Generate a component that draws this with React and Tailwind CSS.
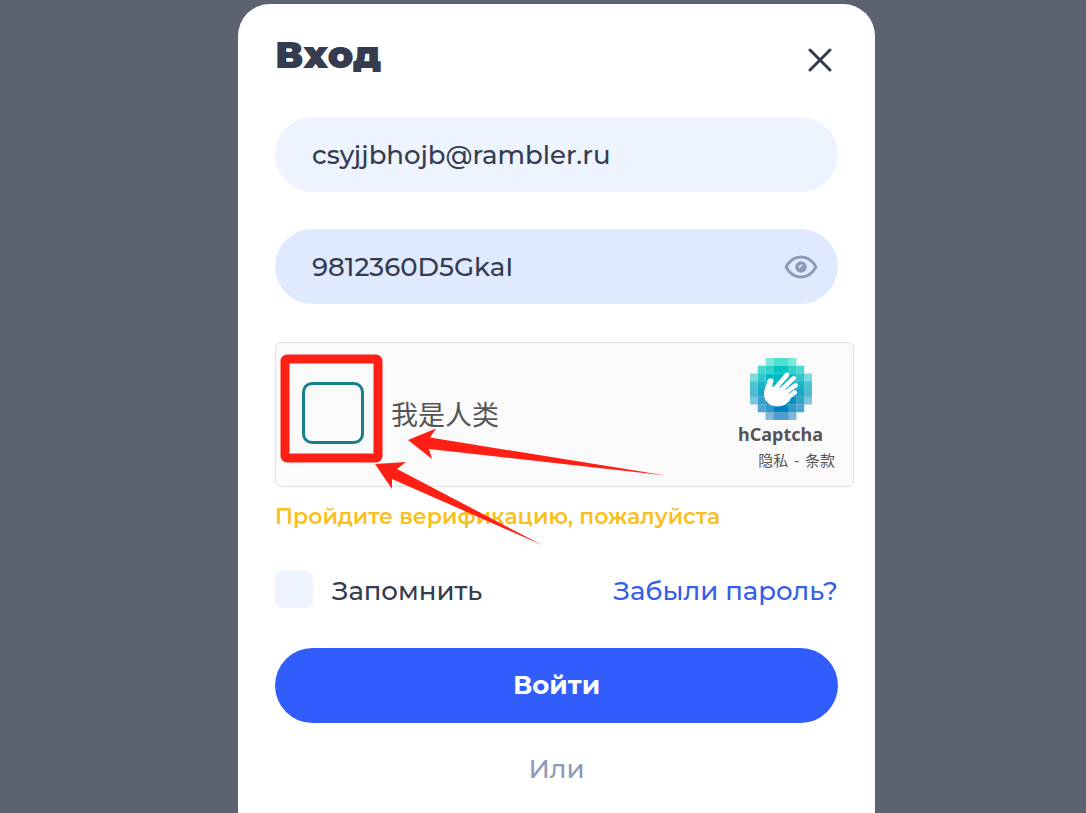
import React, { useState } from "react";

// Each row of the logo mosaic: colour, first column and the opacity of its cells
const mosaic = [
  { fill: "#00D4BF", start: 2, cells: [0.5, 0.7, 0.7, 0.5] },
  { fill: "#00C6BF", start: 1, cells: [0.7, 0.8, 1, 1, 0.8, 0.7] },
  { fill: "#00B9BF", start: 0, cells: [0.5, 0.8, 1, 1, 1, 1, 0.8, 0.5] },
  { fill: "#00ABBF", start: 0, cells: [0.7, 0.9, 1, 1, 1, 1, 0.9, 0.7] },
  { fill: "#009DBF", start: 0, cells: [0.7, 0.9, 1, 1, 1, 1, 0.9, 0.7] },
  { fill: "#008FBF", start: 0, cells: [0.5, 0.8, 1, 1, 1, 1, 0.8, 0.5] },
  { fill: "#0082BF", start: 1, cells: [0.7, 0.8, 1, 1, 0.8, 0.7] },
  { fill: "#0074BF", start: 2, cells: [0.5, 0.7, 0.7, 0.5] },
];

const CaptchaLogo = () => (
  <svg viewBox="0 0 32 32" className="w-[62px] h-[62px]" aria-hidden="true">
    {mosaic.map((row, y) =>
      row.cells.map((opacity, i) => (
        <rect
          key={`${y}-${i}`}
          x={(row.start + i) * 4}
          y={y * 4}
          width="4"
          height="4"
          fill={row.fill}
          opacity={opacity}
        />
      ))
    )}
    <path
      d="M8.2 14.6 9 11.6C9.6 9.9 12.2 10.1 12 11.9L11.5 14.300C11.700 15.200 12.400 15.500 13 14.800L20.500 18.500 20.800 21.600C19 23.800 17 25 14.200 25 10 25 7.200 22 7.200 18.400 7.200 17 7.600 16.200 8.200 14.600Z"
      fill="#fff"
    />
    <g stroke="#fff" strokeWidth="2.400" strokeLinecap="round">
      <path d="M13.200 15.600 19.100 8.600" />
      <path d="M14.800 17.600 22.600 10.400" />
      <path d="M16.500 19.200 23.600 14" />
      <path d="M18.400 21.300 23 17.800" />
    </g>
    <path d="M12.600 15 17.500 15.600 19.600 17.800 19.800 21.600 14 22Z" fill="#fff" />
  </svg>
);

const CloseIcon = () => (
  <svg viewBox="0 0 24 24" className="w-6 h-6" aria-hidden="true">
    <path
      d="M2 2 22 22M22 2 2 22"
      stroke="#353c50"
      strokeWidth="3"
      strokeLinecap="round"
    />
  </svg>
);

const EyeIcon = () => (
  <svg viewBox="0 0 34 24" className="w-[34px] h-6" fill="none" aria-hidden="true">
    <path
      d="M2 12C5.500 5.600 10.800 2 17 2S28.500 5.600 32 12C28.500 18.400 23.200 22 17 22S5.500 18.400 2 12Z"
      stroke="#8f99b8"
      strokeWidth="2.800"
      strokeLinejoin="round"
    />
    <circle cx="17" cy="12" r="5.800" fill="#8f99b8" />
    <path
      d="M14.800 13.200C14.200 10.800 16 9.400 18.800 9.600 18.800 11.400 17 11.200 16.600 11.800 16.200 12.600 15.800 13.200 14.800 13.200Z"
      fill="#e0eaff"
    />
  </svg>
);

// Red frame and arrows laid over the captcha
const Markup = () => (
  <svg
    viewBox="0 0 400 210"
    className="absolute left-0 top-0 w-[400px] h-[210px] pointer-events-none"
    aria-hidden="true"
  >
    <rect
      x="10"
      y="17"
      width="93"
      height="99"
      rx="2"
      fill="none"
      stroke="#ff2015"
      strokeWidth="9"
      strokeLinejoin="round"
    />
    <path
      d="M133 98 161 86.500 155 95.500 391 133.500 154 107 157 117Z"
      fill="#ff2015"
    />
    <path
      d="M100 122 131 120 122 127 267 203 117 137 117 147Z"
      fill="#ff2015"
    />
  </svg>
);

const App = () => {
  const [email, setEmail] = useState("csyjjbhojb@rambler.ru");
  const [password, setPassword] = useState("9812360D5GkaI");
  const [showPassword, setShowPassword] = useState(true);
  const [remember, setRemember] = useState(false);

  return (
    <div className="min-h-screen flex justify-center bg-[#5c6270] pt-1 pl-[27px] font-[Montserrat,Inter,sans-serif] font-medium text-[#353c50]">
      <div className="w-full max-w-[637px] bg-white rounded-t-[32px] px-[37px] pt-8">
        {/* Header */}
        <div className="flex items-center justify-between h-[45px] mb-9">
          <h1 className="text-[38px] leading-9 font-black pb-2">Вход</h1>
          <button type="button" aria-label="Закрыть" className="mr-[6px] mt-[2px] cursor-pointer">
            <CloseIcon />
          </button>
        </div>

        <form onSubmit={(e) => e.preventDefault()}>
          <input
            type="email"
            aria-label="Email"
            value={email}
            onChange={(e) => setEmail(e.target.value)}
            className="block w-full h-[75px] rounded-full bg-[#eef4ff] px-[37px] text-[26px] outline-none"
          />

          <div className="flex items-center h-[75px] mt-[37px] rounded-full bg-[#e0eaff] pl-[37px] pr-5">
            <input
              type={showPassword ? "text" : "password"}
              aria-label="Пароль"
              value={password}
              onChange={(e) => setPassword(e.target.value)}
              className="flex-1 min-w-0 h-full bg-transparent text-[26px] outline-none"
            />
            <button
              type="button"
              aria-label="Показать пароль"
              onClick={() => setShowPassword((prev) => !prev)}
              className="cursor-pointer"
            >
              <EyeIcon />
            </button>
          </div>

          {/* Captcha */}
          <div className="relative mt-[38px] -mr-4">
            <div className="flex items-center justify-between h-[145px] rounded-md border border-[#e0e0e0] bg-[#fafafa] pl-[26px] pr-[18px] font-['Noto_Sans','Noto_Sans_CJK_SC',sans-serif] text-[#555]">
              <label className="flex items-start gap-[27px] text-[27px] leading-[66px] font-normal">
                <input
                  type="checkbox"
                  className="appearance-none w-[62px] h-[62px] rounded-[10px] border-[3px] border-[#14808a] bg-[#fafafa] checked:bg-[#14808a]"
                />
                我是人类
              </label>
              <div className="flex flex-col items-end">
                <div className="flex flex-col items-center mr-3">
                  <CaptchaLogo />
                  <span className="text-[18px] leading-7 font-bold">hCaptcha</span>
                </div>
                <div className="flex gap-[6px] text-[15px] leading-6 font-normal">
                  <a href="#privacy">隐私</a>
                  <span>-</span>
                  <a href="#terms">条款</a>
                </div>
              </div>
            </div>
            <Markup />
          </div>

          <p className="mt-[14px] text-[22px] leading-8 font-semibold text-[#fbbf1c]">
            Пройдите верификацию, пожалуйста
          </p>

          <div className="flex items-center justify-between mt-[37px] text-[26px] leading-9">
            <label className="flex items-center gap-[19px]">
              <input
                type="checkbox"
                checked={remember}
                onChange={(e) => setRemember(e.target.checked)}
                className="appearance-none w-[38px] h-[37px] rounded-lg bg-[#eef4ff] checked:bg-[#305dfb]"
              />
              <span className="pt-[3px]">Запомнить</span>
            </label>
            <a href="#forgot" className="pt-[3px] text-[#355fe8]">
              Забыли пароль?
            </a>
          </div>

          <button
            type="submit"
            className="block w-full h-[75px] mt-[39px] rounded-full bg-[#305dfb] text-[26px] font-bold text-white cursor-pointer"
          >
            Войти
          </button>
        </form>

        <p className="mt-7 text-center text-[26px] leading-9 text-[#8f99b8]">Или</p>
      </div>
    </div>
  );
};

export default App;
